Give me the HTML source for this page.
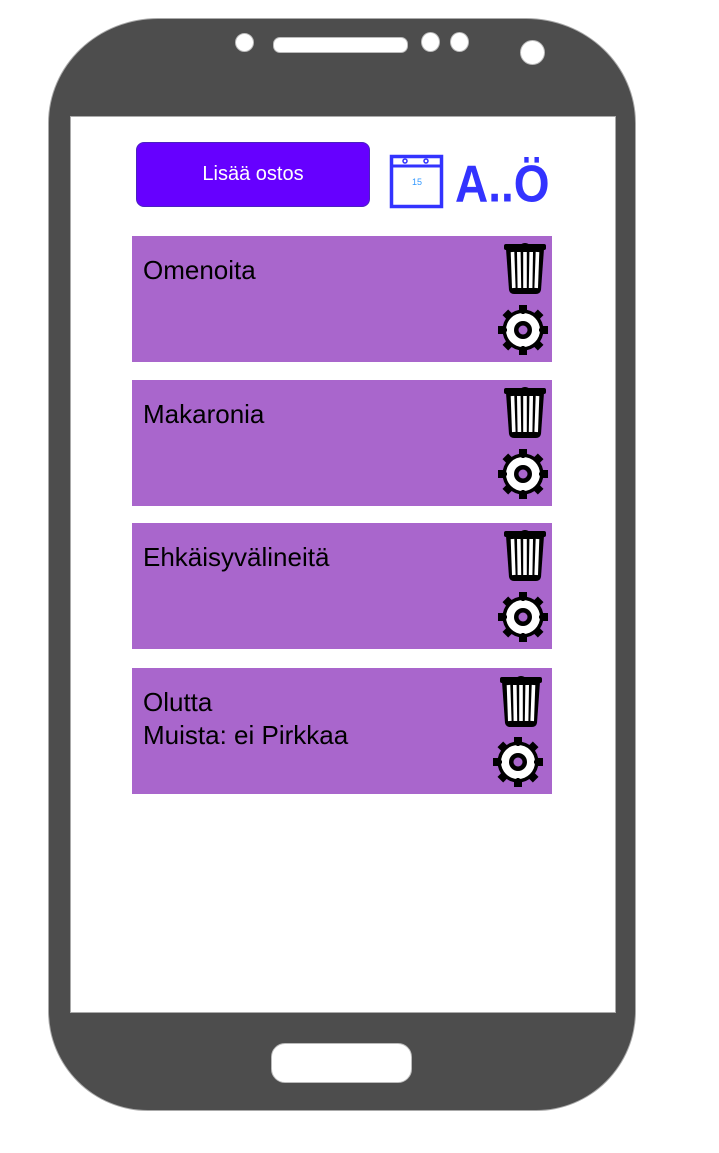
<!DOCTYPE html>
<html><head><meta charset="utf-8"><style>
body{margin:0;width:719px;height:1153px;background:#fff;position:relative;overflow:hidden;font-family:"Liberation Sans",Arial,sans-serif}
.abs{position:absolute}
.phone{left:48px;top:18px;width:586px;height:1091px;background:#4d4d4d;border:1px solid #aaa;border-radius:110px 110px 100px 100px / 105px 105px 100px 100px}
.screen{left:70px;top:116px;width:544px;height:895px;background:#fff;border:1px solid #aaa}
.hole{background:#fff;border:1.5px solid #bbb;border-radius:50%}
.btn{left:136px;top:142px;width:232px;height:63px;background:#6600ff;border:1px solid #4a22c0;border-radius:8px;color:#fff;font-size:20px;text-align:center;line-height:62px}
.card{left:132px;width:420px;height:126px;background:#a966cc}
.card .t{position:absolute;left:11px;top:18px;font-size:26px;color:#000;line-height:33px}
</style></head><body>
<svg width="0" height="0" style="position:absolute">
<symbol id="trash" viewBox="0 0 44 53">
<path d="M17 4 Q22 0 27 4 Z" fill="#000"/>
<rect x="1" y="3" width="42" height="6" rx="2" fill="#000"/>
<path d="M3 8 L41 8 L38 49 Q37 53 33 53 L11 53 Q7 53 6 49 Z" fill="#000"/>
<g stroke="#fff" stroke-width="3.6">
<line x1="9.5" y1="11" x2="10.8" y2="47"/><line x1="15.8" y1="11" x2="16.4" y2="47"/><line x1="22" y1="11" x2="22" y2="47"/><line x1="28.2" y1="11" x2="27.6" y2="47"/><line x1="34.5" y1="11" x2="33.2" y2="47"/>
</g>
</symbol>
<symbol id="gear" viewBox="0 0 50 50">
<g fill="#000">
<circle cx="25" cy="25" r="20.5"/>
<g id="teeth"><rect x="21" y="0" width="8" height="50"/><rect x="0" y="21" width="50" height="8"/></g>
<use href="#teeth" transform="rotate(45 25 25)"/>
</g>
<circle cx="25" cy="25" r="17" fill="#fff"/>
<g fill="#000"><g id="nub"><rect x="23.5" y="6" width="3" height="3"/><rect x="23.5" y="41" width="3" height="3"/><rect x="6" y="23.5" width="3" height="3"/><rect x="41" y="23.5" width="3" height="3"/></g></g>
<circle cx="25" cy="25" r="9" fill="#000"/>
<circle cx="25" cy="25" r="4.5" fill="#a966cc"/>
</symbol>
</svg>
<div class="abs phone"></div>
<div class="abs hole" style="left:235px;top:33px;width:17px;height:17px"></div>
<div class="abs hole" style="left:273px;top:37px;width:133px;height:14px;border-radius:7px"></div>
<div class="abs hole" style="left:421px;top:32px;width:17px;height:18px"></div>
<div class="abs hole" style="left:450px;top:32px;width:17px;height:18px"></div>
<div class="abs hole" style="left:520px;top:40px;width:23px;height:23px"></div>
<div class="abs hole" style="left:271px;top:1043px;width:139px;height:38px;border-radius:14px"></div>
<div class="abs screen"></div>
<div class="abs btn">Lisää ostos</div>
<svg class="abs" style="left:389px;top:154px" width="56" height="56" viewBox="0 0 56 56">
<rect x="2.5" y="2.5" width="50" height="50" fill="none" stroke="#3333ff" stroke-width="3.5"/>
<line x1="2" y1="12" x2="53" y2="12" stroke="#3333ff" stroke-width="3"/>
<circle cx="16" cy="7" r="2" fill="#fff" stroke="#3333ff" stroke-width="1.5"/>
<circle cx="37" cy="7" r="2" fill="#fff" stroke="#3333ff" stroke-width="1.5"/>
<text x="28" y="31" font-size="9" fill="#3399ff" text-anchor="middle" font-family="Liberation Sans">15</text>
</svg>
<div class="abs" style="left:455px;top:150px;font-size:46px;font-weight:bold;color:#3333ff;line-height:60px;transform:scaleY(1.12);transform-origin:0 0">A..Ö</div>

<div class="abs card" style="top:236px"><div class="t">Omenoita</div>
<svg class="abs" style="left:371px;top:5px" width="44" height="53"><use href="#trash"/></svg>
<svg class="abs" style="left:366px;top:69px" width="50" height="50"><use href="#gear"/></svg></div>
<div class="abs card" style="top:380px"><div class="t">Makaronia</div>
<svg class="abs" style="left:371px;top:5px" width="44" height="53"><use href="#trash"/></svg>
<svg class="abs" style="left:366px;top:69px" width="50" height="50"><use href="#gear"/></svg></div>
<div class="abs card" style="top:523px"><div class="t">Ehkäisyvälineitä</div>
<svg class="abs" style="left:371px;top:5px" width="44" height="53"><use href="#trash"/></svg>
<svg class="abs" style="left:366px;top:69px" width="50" height="50"><use href="#gear"/></svg></div>
<div class="abs card" style="top:668px"><div class="t">Olutta<br>Muista: ei Pirkkaa</div>
<svg class="abs" style="left:367px;top:6px" width="44" height="53"><use href="#trash"/></svg>
<svg class="abs" style="left:361px;top:69px" width="50" height="50"><use href="#gear"/></svg></div>
</body></html>
